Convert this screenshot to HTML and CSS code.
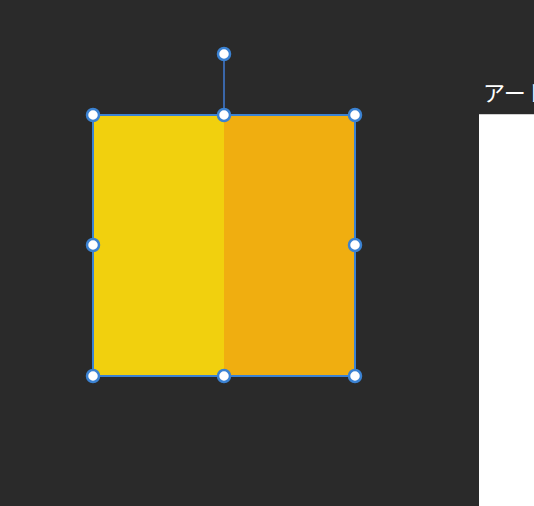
FILE: index.html
```html
<!DOCTYPE html>
<html lang="ja">
<head>
<meta charset="utf-8">
<link rel="stylesheet" href="styles.css">
</head>
<body>
<div class="app">
  <div class="canvas">
    <svg class="stage" width="479" height="506" viewBox="0 0 479 506">
      <rect x="93" y="115" width="131" height="261" fill="#f1d00e"/>
      <rect x="224" y="115" width="131" height="261" fill="#f0ae10"/>
      <rect x="93" y="115" width="262" height="261" fill="none" stroke="#3b82d2" stroke-width="2"/>
      <line x1="224" y1="54" x2="224" y2="115" stroke="#3a66a8" stroke-width="2"/>
      <g fill="#ffffff" stroke="#3b82d2" stroke-width="2.5">
        <circle cx="224" cy="54" r="6"/>
        <circle cx="93" cy="115" r="6"/>
        <circle cx="224" cy="115" r="6"/>
        <circle cx="355" cy="115" r="6"/>
        <circle cx="93" cy="245" r="6"/>
        <circle cx="355" cy="245" r="6"/>
        <circle cx="93" cy="376" r="6"/>
        <circle cx="224" cy="376" r="6"/>
        <circle cx="355" cy="376" r="6"/>
      </g>
    </svg>
  </div>
  <div class="panel">
    <div class="title">アートボード</div>
    <div class="sheet"></div>
  </div>
</div>
</body>
</html>
```

FILE: styles.css
```css
html, body {
  margin: 0;
  padding: 0;
  width: 534px;
  height: 506px;
  overflow: hidden;
  background: #2a2a2a;
}
.app {
  display: flex;
  width: 534px;
  height: 506px;
}
.canvas {
  width: 479px;
  flex: 0 0 479px;
  height: 506px;
}
.stage {
  display: block;
}
.panel {
  flex: 1 1 auto;
  display: flex;
  flex-direction: column;
  min-width: 0;
  overflow: hidden;
}
.title {
  margin-top: 77px;
  margin-left: 4px;
  height: 28px;
  line-height: 28px;
  font-family: "Noto Sans CJK JP", "Noto Sans", sans-serif;
  font-size: 22px;
  color: #ffffff;
  white-space: nowrap;
}
.sheet {
  margin-top: 9px;
  flex: 1 1 auto;
  background: #ffffff;
  border-top: 1px solid #cfcfcf;
}
```
